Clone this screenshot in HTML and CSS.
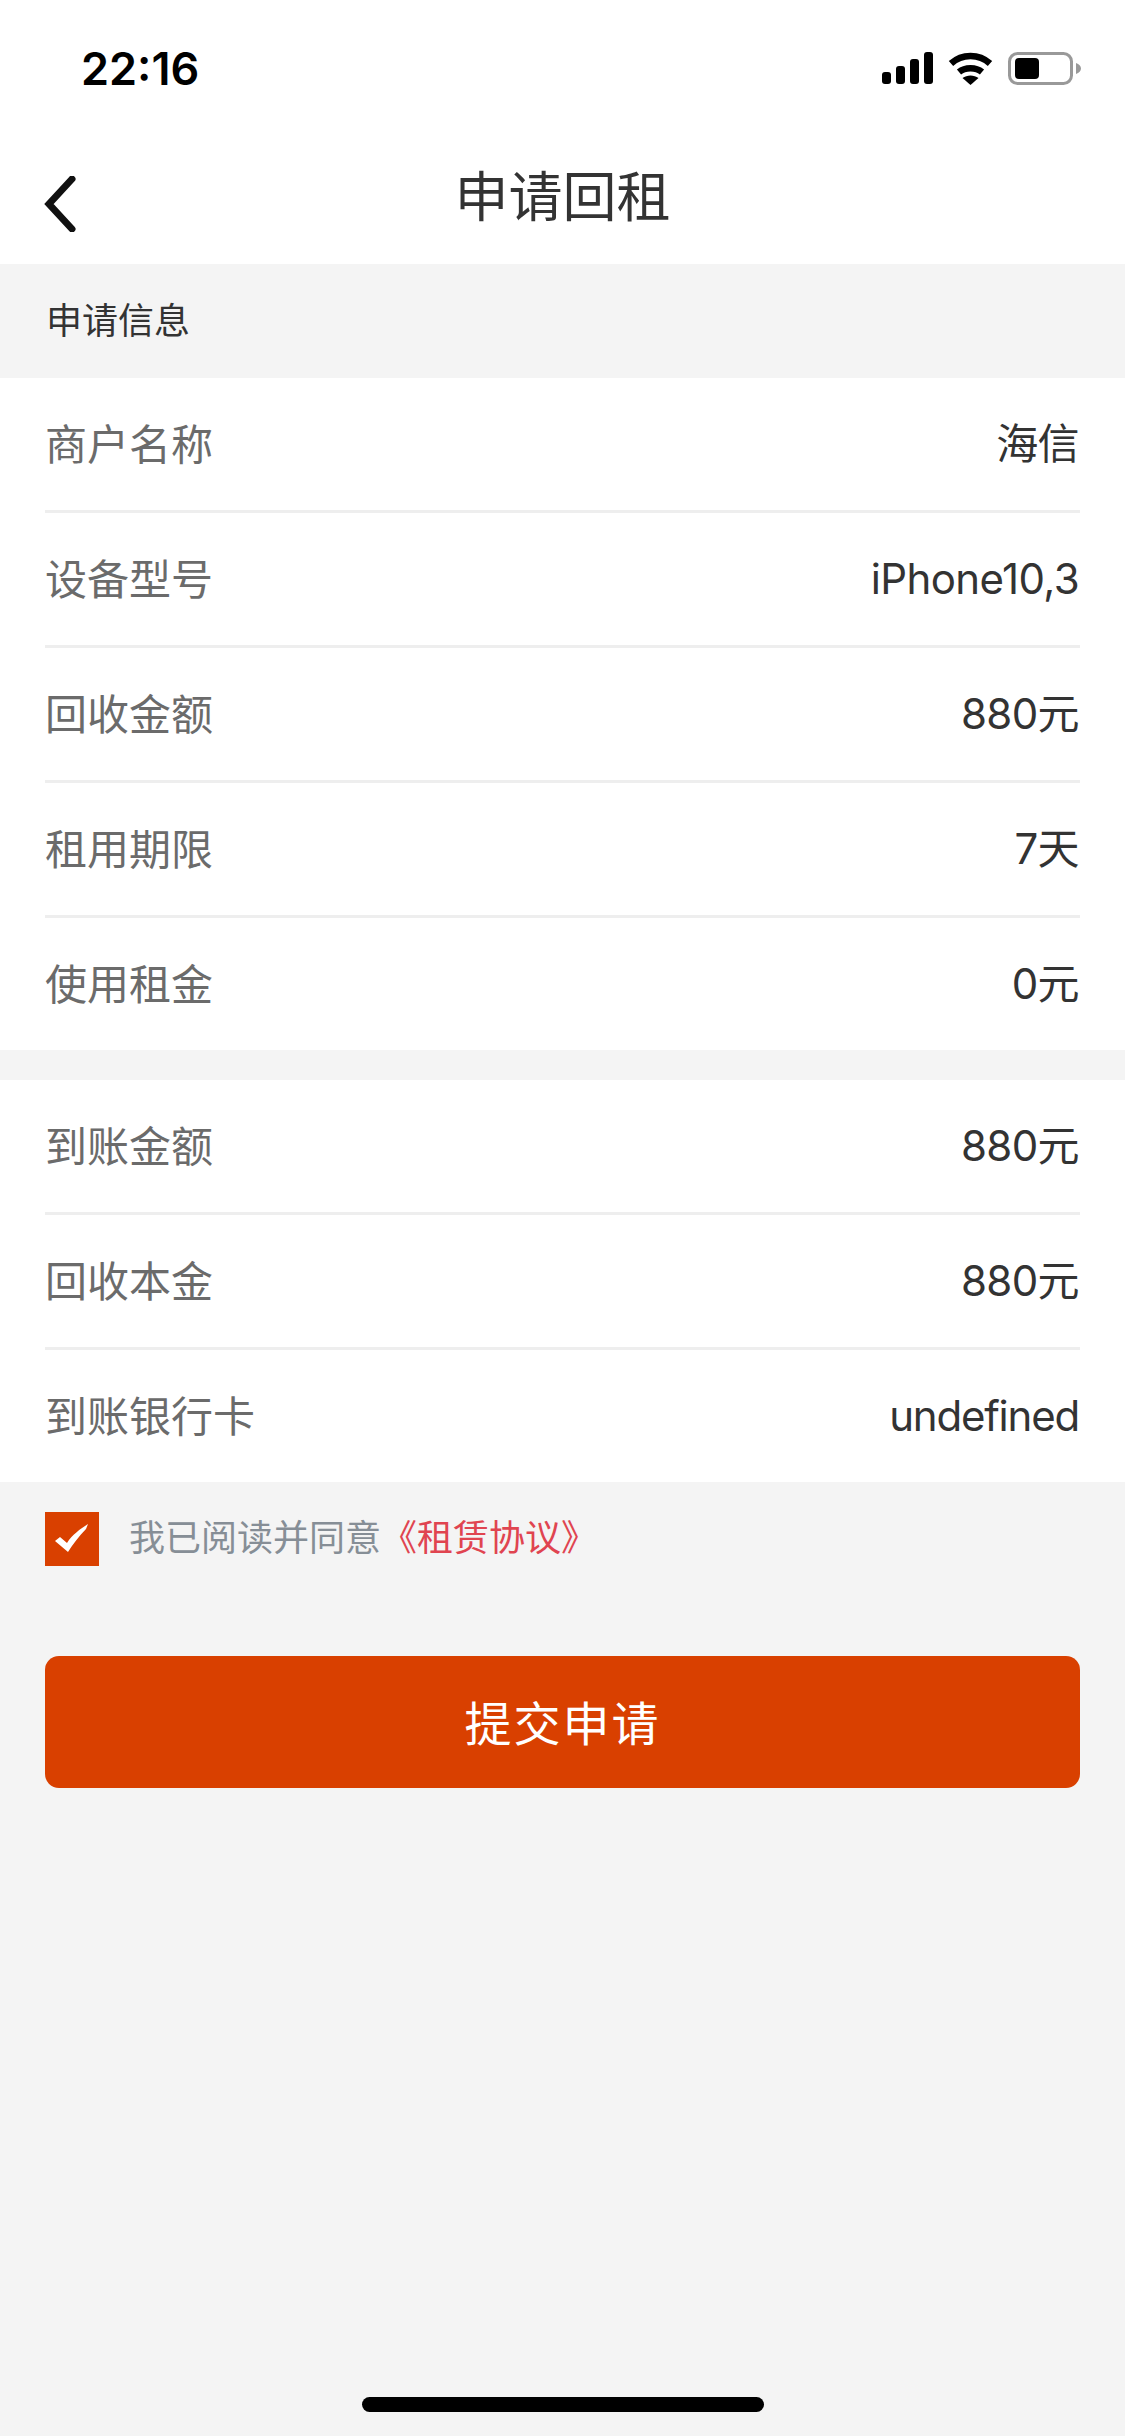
FILE: index.html
```html
<!DOCTYPE html>
<html lang="zh-CN">
<head>
  <meta charset="UTF-8" />
  <meta name="viewport" content="width=device-width, initial-scale=1.0"/>
  <title>申请回租</title>

  <link rel="stylesheet" href="styles.css">
</head>
<body>

  <div class="page">

    <!-- status bar -->
    <div class="status-bar">
      <span class="status-time">22:16</span>
      <div class="status-icons">
        <svg class="icon-signal" width="51" height="32" viewBox="0 0 51 32">
          <rect x="0" y="20" width="9" height="12" rx="3"/>
          <rect x="14" y="14" width="9" height="18" rx="3"/>
          <rect x="28" y="7" width="9" height="25" rx="3"/>
          <rect x="42" y="0" width="9" height="32" rx="3"/>
        </svg>
        <svg class="icon-wifi" width="45" height="33" viewBox="0 0 45 33">
          <path d="M3 11.5 C14 1.5 31 1.5 42 11.5" fill="none" stroke="#000" stroke-width="6.5"/>
          <path d="M11 20 C17 15 28 15 34 20" fill="none" stroke="#000" stroke-width="6.5"/>
          <path d="M22.5 33 L14.5 26 C19 22.6 26 22.6 30.500 26 Z"/>
        </svg>
        <svg class="icon-battery" width="73" height="33" viewBox="0 0 73 33">
          <rect x="1.500" y="1.500" width="62" height="30" rx="8" fill="none" stroke="#999" stroke-width="3"/>
          <rect x="7" y="6" width="24" height="21" rx="4"/>
          <path d="M68 11 C71 12 73 14 73 16.500 C73 19 71 21 68 22 Z" fill="#999"/>
        </svg>
      </div>
    </div>

    <!-- nav -->
    <div class="nav-bar">
      <svg class="back-icon" width="32" height="56" viewBox="0 0 32 56">
        <path d="M28 3 L5 28 L28 53" fill="none" stroke="#111" stroke-width="7" stroke-linecap="round" stroke-linejoin="miter"/>
      </svg>
      <h1 class="nav-title">申请回租</h1>
    </div>

    <div class="section-title">申请信息</div>

    <div class="group">
      <div class="row"><span class="row-label">商户名称</span><span class="row-value">海信</span></div>
      <div class="row"><span class="row-label">设备型号</span><span class="row-value">iPhone10,3</span></div>
      <div class="row"><span class="row-label">回收金额</span><span class="row-value">880元</span></div>
      <div class="row"><span class="row-label">租用期限</span><span class="row-value">7天</span></div>
      <div class="row"><span class="row-label">使用租金</span><span class="row-value">0元</span></div>
    </div>

    <div class="group group-second">
      <div class="row"><span class="row-label">到账金额</span><span class="row-value">880元</span></div>
      <div class="row"><span class="row-label">回收本金</span><span class="row-value">880元</span></div>
      <div class="row"><span class="row-label">到账银行卡</span><span class="row-value row-value-tight">undefined</span></div>
    </div>

    <!-- agreement -->
    <div class="agree">
      <span class="agree-box">
        <svg width="34" height="30" viewBox="0 0 34 30">
          <path d="M0 17 L5 13 L12 19 C17 11 25 5 33 0 L31 5 C24 12 18 20 13 28 Z" fill="#fff"/>
        </svg>
      </span>
      <span class="agree-text">我已阅读并同意<span class="agree-link">《租赁协议》</span></span>
    </div>

    <button class="submit-button">提交申请</button>

    <div class="home-indicator"></div>
  </div>

</body>
</html>
```

FILE: styles.css
```css
* {
  box-sizing: border-box;
}
body {
  margin: 0;
  background-color: #f4f4f4;
  font-family: "Liberation Sans", "Noto Sans CJK SC", sans-serif;
  color: #333;
}
.page {
  display: flex;
  flex-direction: column;
  min-height: 2436px;
}
.status-bar {
  display: flex;
  justify-content: space-between;
  align-items: center;
  height: 88px;
  padding: 48px 44px 0 81px;
  background-color: #fff;
}
.status-time {
  font-family: Inter, "Liberation Sans", sans-serif;
  font-size: 45px;
  font-weight: 600;
  color: #000;
}
.status-icons {
  display: flex;
  align-items: center;
  gap: 15px;
}
.nav-bar {
  position: relative;
  display: flex;
  align-items: center;
  justify-content: center;
  height: 176px;
  padding-top: 35px;
  background-color: #fff;
}
.back-icon {
  position: absolute;
  left: 44px;
  top: 88px;
}
.nav-title {
  margin: 0;
  font-size: 54px;
  font-weight: 400;
  color: #333;
}
.section-title {
  display: flex;
  align-items: center;
  height: 114px;
  padding: 0 0 6px 46px;
  font-size: 36px;
}
.group {
  padding: 0 45px;
  background-color: #fff;
}
.group-second {
  margin-top: 30px;
}
.row {
  display: flex;
  justify-content: space-between;
  align-items: center;
  height: 135px;
  border-bottom: 3px solid #eee;
}
.row:last-child {
  height: 132px;
  border-bottom: none;
}
.row-label {
  padding-bottom: 6px;
  font-size: 42px;
  color: #6b6b6b;
}
.row-value {
  padding-right: 1px;
  font-family: Inter, "Noto Sans CJK SC", sans-serif;
  font-size: 42px;
  line-height: 50px;
  letter-spacing: -0.6px;
  color: #333;
}
.row-value-tight {
  letter-spacing: -1.2px;
}
.agree {
  display: flex;
  align-items: center;
  gap: 30px;
  height: 84px;
  padding: 30px 45px 0;
}
.agree-box {
  display: flex;
  align-items: center;
  justify-content: center;
  width: 54px;
  height: 54px;
  background-color: #d94000;
}
.agree-text {
  font-size: 36px;
  line-height: 42px;
  color: #868e96;
}
.agree-link {
  color: #e04450;
}
.submit-button {
  height: 132px;
  margin: 90px 45px 0;
  padding-bottom: 4px;
  border: none;
  border-radius: 14px;
  background-color: #d94000;
  color: #fff;
  font-family: inherit;
  font-size: 47px;
  letter-spacing: 2px;
}
.home-indicator {
  width: 402px;
  height: 15px;
  margin: auto auto 24px;
  border-radius: 8px;
  background-color: #000;
}
```
